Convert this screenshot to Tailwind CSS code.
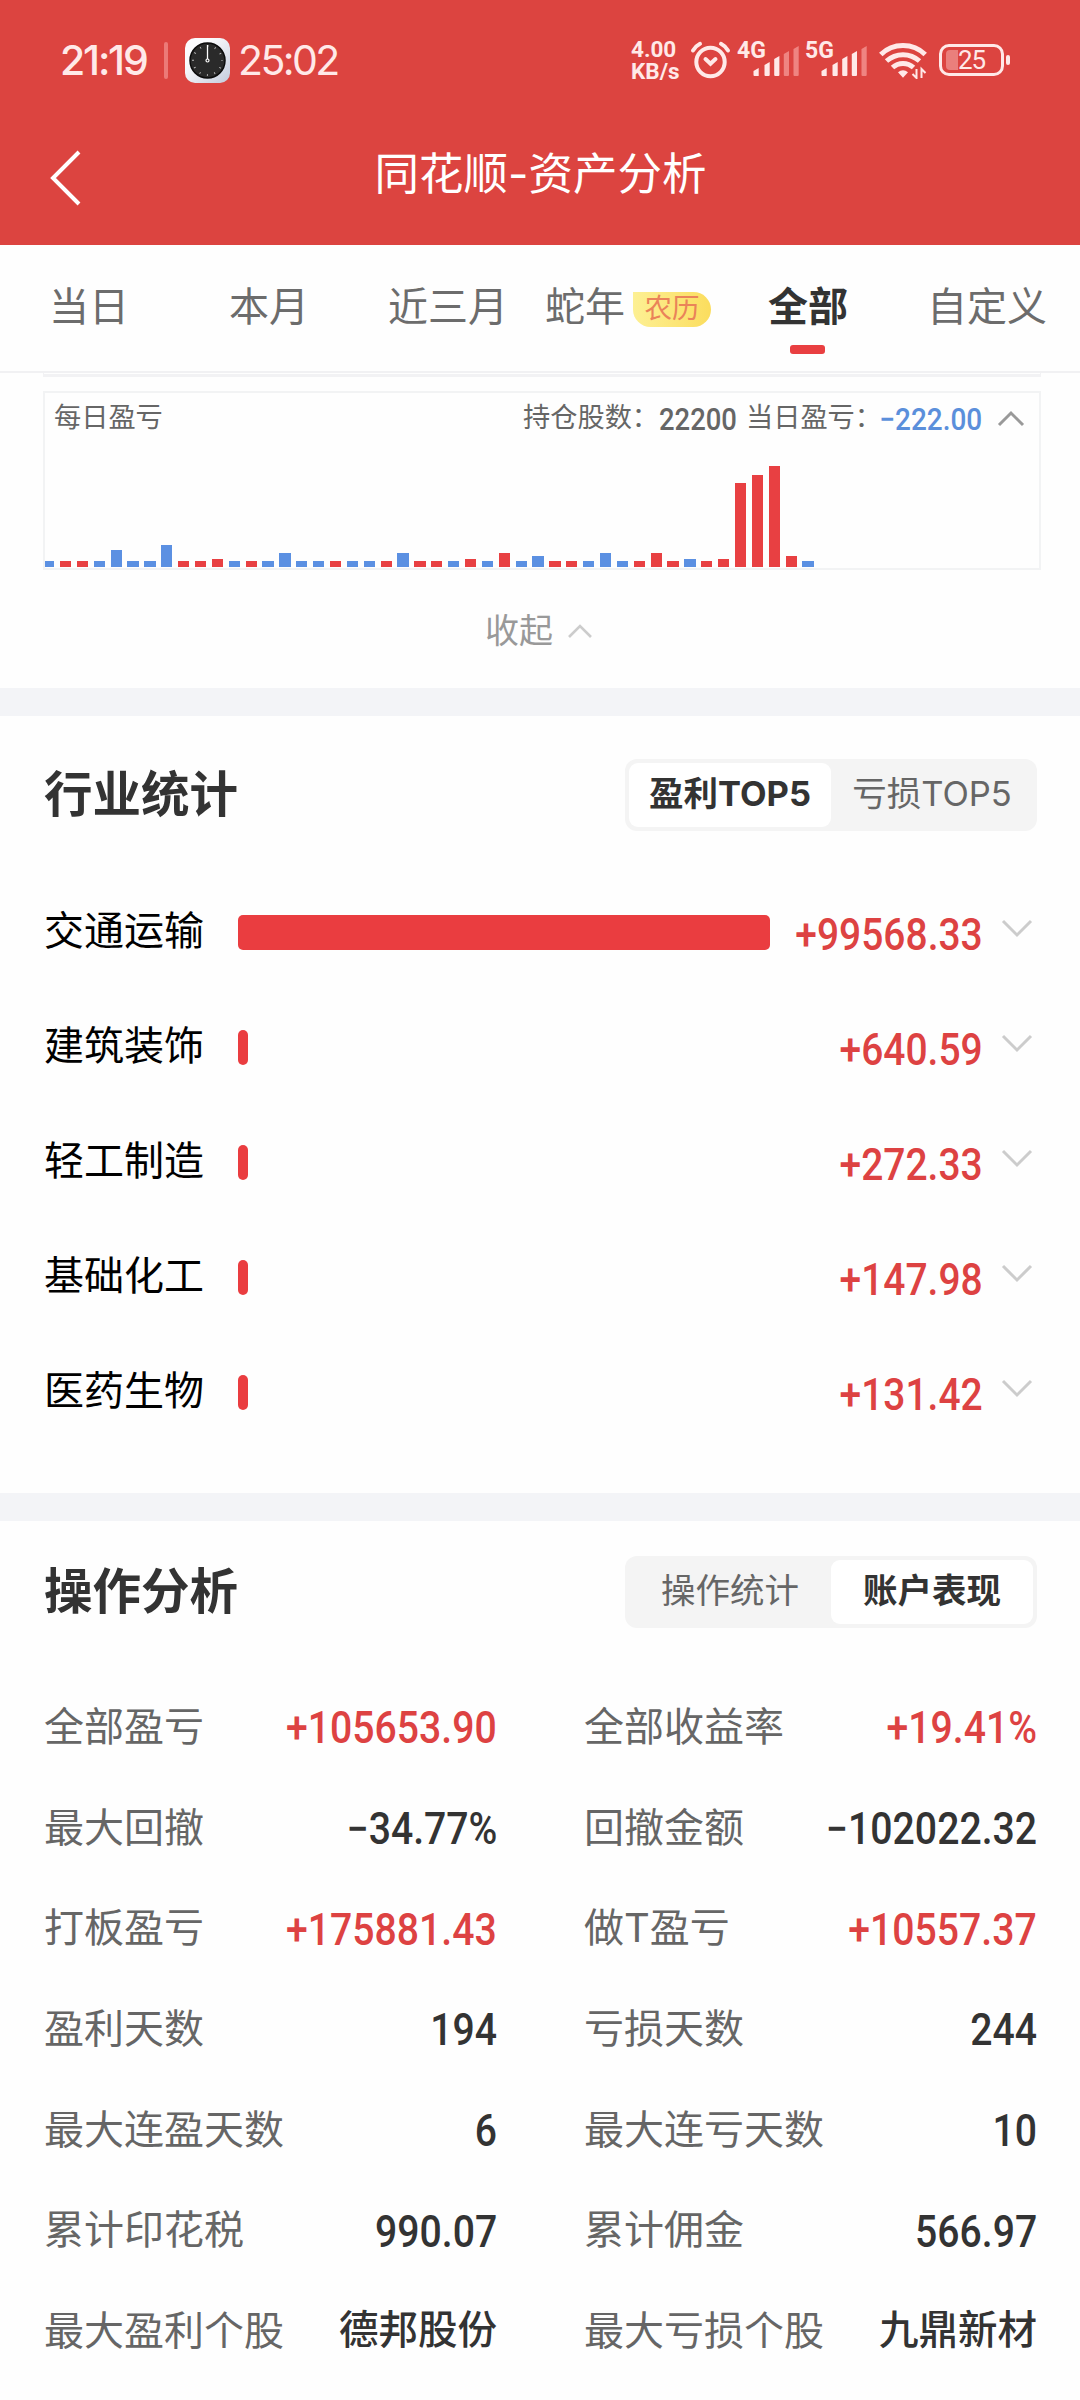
<!DOCTYPE html>
<html lang="zh-CN">
<head>
    <meta charset="UTF-8">
    <meta name="viewport" content="width=device-width, initial-scale=1.0">
    <title>同花顺-资产分析</title>
    <script src="https://cdn.jsdelivr.net/npm/@tailwindcss/browser@4"></script>
    <style>
        body { font-family: 'Inter', 'Noto Sans CJK SC', sans-serif; }
        .num { font-family: 'Roboto', 'Noto Sans CJK SC', sans-serif; }
    </style>
</head>
<body class="bg-[#fefefe] text-[#333] w-[1080px] h-[2400px] overflow-hidden leading-none">

    <!-- Cabecera -->
    <header class="h-[245px] bg-[#dc4440] text-white">
        <!-- Barra de estado -->
        <div class="h-[120px] flex items-center pl-[60px] text-[#ffe9e8]">
            <span class="w-[92px] text-[41px] font-medium tracking-[-2.2px] whitespace-nowrap">21:19</span>
            <span class="ml-[12px] w-1 h-[37px] rounded-full bg-[#ec7a77]"></span>
            <svg class="ml-[17px]" width="45" height="45" viewBox="0 0 45 45">
                <defs>
                    <linearGradient id="face" x1="0" y1="0" x2="1" y2="1">
                        <stop offset="0.3" stop-color="#fbfbfd"/>
                        <stop offset="1" stop-color="#c3cbdc"/>
                    </linearGradient>
                </defs>
                <rect width="45" height="45" rx="10" fill="url(#face)"/>
                <circle cx="22.5" cy="22.5" r="17.5" fill="#2a2a2a" stroke="#0c0c0c" stroke-width="1.5"/>
                <circle cx="22.5" cy="22.5" r="14.5" fill="none" stroke="#bbb" stroke-width="2" stroke-dasharray="0.9 6.69" stroke-dashoffset="0.45"/>
                <path d="M22.5 7v14" stroke="#fff" stroke-width="1.3"/>
                <circle cx="22.5" cy="22.5" r="1.5" fill="#222" stroke="#fff" stroke-width="1.2"/>
            </svg>
            <span class="ml-[8px] w-[110px] text-[41px] tracking-[-2.6px] whitespace-nowrap">25:02</span>

            <div class="num ml-auto w-[56px] text-[22.5px] leading-[22px] font-bold">
                <div class="whitespace-nowrap">4.00</div>
                <div class="whitespace-nowrap">KB/s</div>
            </div>
            <svg class="ml-[3px]" width="41" height="40" viewBox="0 0 41 40" fill="none" stroke="#ffe9e8" stroke-width="4" stroke-linecap="round">
                <circle cx="20.5" cy="22" r="14.2"/>
                <path d="M15.5 19l5 4.7 5-4.7"/>
                <path d="M3 10.5c2-3.200 4.200-5.300 7-6.700M38 10.500c-2-3.200-4.200-5.300-7-6.700"/>
            </svg>
            <div class="num ml-[6px] w-[68px] h-[37px] relative">
                <span class="absolute left-0 -top-[3px] text-[23px] font-bold">4G</span>
                <svg class="absolute left-[16px] top-0" width="46" height="37" fill="#ffe9e8">
                    <path d="M0.500 29l5.200-3v8h-4.200q-1 0-1-1zM11.500 23l5.200-3v13q0 1-1 1h-3.200q-1 0-1-1zM21.200 17l5.200-3v19q0 1-1 1h-3.200q-1 0-1-1z"/>
                    <path fill="#ef8481" d="M30.800 12l5.200-3v24q0 1-1 1h-3.200q-1 0-1-1zM40.500 7l5.200-3v29q0 1-1 1h-3.200q-1 0-1-1z"/>
                </svg>
            </div>
            <div class="num w-[68px] h-[37px] relative">
                <span class="absolute left-0 -top-[3px] text-[23px] font-bold">5G</span>
                <svg class="absolute left-[16px] top-0" width="46" height="37" fill="#ffe9e8">
                    <path d="M0.500 29l5.200-3v8h-4.200q-1 0-1-1zM11.500 23l5.200-3v13q0 1-1 1h-3.200q-1 0-1-1zM21.200 17l5.200-3v19q0 1-1 1h-3.200q-1 0-1-1zM30.800 12l5.200-3v24q0 1-1 1h-3.200q-1 0-1-1z"/>
                    <path fill="#ef8481" d="M40.500 7l5.200-3v29q0 1-1 1h-3.200q-1 0-1-1z"/>
                </svg>
            </div>
            <svg class="ml-[6px]" width="48" height="38" viewBox="0 0 48 38" fill="none" stroke="#ffe9e8" stroke-width="5">
                <path d="M1.800 13.500C14 1.500 34 1.500 46.200 13.500"/>
                <path d="M7.500 20C17 11.500 31 11.500 40.500 20"/>
                <path d="M13.500 26.500c6-5.500 15-5.500 21 0"/>
                <path d="M19 31.200q5-4 10 0L24 36.800z" fill="#ffe9e8" stroke="none"/>
                <path d="M37.500 28v9l-4-4M42.500 37v-9l4 4" stroke-width="2"/>
            </svg>
            <div class="num ml-[12px] w-[65px] h-[32px] border-[3px] border-[#ffe9e8] rounded-[10px] flex items-center pl-[4px]">
                <span class="w-[12px] h-[20px] bg-[#ea7f7c] rounded-l-[4px]"></span>
                <span class="w-[28px] text-[26px] tracking-[-1px]">25</span>
            </div>
            <span class="ml-[2px] mr-[70px] w-[4px] h-[10px] rounded-full bg-[#ffe9e8]"></span>
        </div>
        <!-- Título -->
        <div class="h-[106px] flex items-center">
            <svg class="ml-[49px] w-[33px] h-[58px] mt-[9px]" viewBox="0 0 33 58" fill="none" stroke="#fff" stroke-width="4">
                <path d="M30 3L4 29l26 26"/>
            </svg>
            <h1 class="flex-1 pr-[81px] text-center text-[44.5px] mt-[2px]">同花顺-资产分析</h1>
        </div>
    </header>

    <!-- Pestañas -->
    <nav class="h-[128px] border-b-2 border-[#f1f1f3] pl-[49px] flex items-center text-[40px] text-[#6c6c6c] whitespace-nowrap">
        <span class="-mt-[2px]">当日</span>
        <span class="-mt-[2px] ml-[100px]">本月</span>
        <span class="-mt-[2px] ml-[79px]">近三月</span>
        <span class="-mt-[2px] ml-[37px]">蛇年</span>
        <span class="ml-[8px] w-[78px] h-[35px] mt-[3px] flex items-center justify-center rounded-r-full rounded-bl-full bg-gradient-to-r from-[#fdf093] to-[#fbdd5d] text-[27.5px] text-[#ea8359]"><i class="not-italic -mt-px">农历</i></span>
        <span class="-mt-[2px] ml-[57px] font-bold text-[#333] relative">全部<b class="absolute left-[22px] top-[58px] w-[35px] h-[9px] rounded-[3px] bg-[#e93f41]"></b></span>
        <span class="-mt-[2px] ml-[79px]">自定义</span>
    </nav>

    <!-- Gráfico diario -->
    <section class="h-[315px] px-[43px] text-[#666]">
        <div class="h-1 w-[998px] border border-t-0 border-b-[3px] border-[#f2f2f4]"></div>
        <div class="mt-[14px] w-[998px] h-[179px] border-2 border-[#f2f3f4] flex flex-col overflow-hidden">
            <div class="flex items-center h-[50px] pl-[9px] text-[27.2px] whitespace-nowrap">
                <span>每日盈亏</span>
                <span class="ml-auto">持仓股数：</span>
                <span class="num w-[77px] mt-[2px] text-[31px] font-medium"><i class="not-italic inline-block origin-left scale-x-[.885]">22200</i></span>
                <span class="ml-[10px]">当日盈亏：</span>
                <span class="num w-[100px] mt-[2px] flex justify-end text-[31px] font-medium text-[#5b8fdb]"><i class="not-italic inline-block origin-right scale-x-[.9]">−222.00</i></span>
                <svg class="ml-[15px] mr-[14px]" width="28" height="18" viewBox="0 0 28 18" fill="none" stroke="#999" stroke-width="3"><path d="M2 16L14 4l12 12"/></svg>
            </div>
            <div id="bars" class="flex-1 -ml-[2px] mb-px flex items-end gap-[5.58px]"></div>
        </div>
        <div class="h-[119px] flex items-center justify-center pr-[2px] pt-[3px] text-[34px] text-[#999]">
            <span>收起</span>
            <svg class="ml-[14px]" width="26" height="16" viewBox="0 0 26 16" fill="none" stroke="#ccc" stroke-width="2.600"><path d="M2 14L13 3l11 11"/></svg>
        </div>
    </section>
    <div class="h-[28px] bg-[#f3f4f7]"></div>

    <!-- Estadística por sector -->
    <section class="h-[777px] pt-[43px] pl-[44px] pr-[43px]">
        <div class="flex items-center justify-between h-[72px]">
            <h2 class="text-[48.500px] font-bold mt-px">行业统计</h2>
            <div class="w-[412px] h-[72px] p-1 rounded-[12px] bg-[#f4f4f4] flex text-[34.500px]">
                <span class="flex-1 flex items-center justify-center rounded-[9px] bg-white font-bold pb-px">盈利TOP5</span>
                <span class="flex-1 flex items-center justify-center text-[#666] pb-px">亏损TOP5</span>
            </div>
        </div>
        <div id="sectors" class="mt-[43px]"></div>
    </section>
    <div class="h-[28px] bg-[#f3f4f7]"></div>

    <!-- Análisis de operaciones -->
    <section class="pt-[35px] pl-[44px] pr-[43px]">
        <div class="flex items-center justify-between h-[72px]">
            <h2 class="text-[48.500px] font-bold mt-px">操作分析</h2>
            <div class="w-[412px] h-[72px] p-1 rounded-[12px] bg-[#f4f4f4] flex text-[34.500px]">
                <span class="flex-1 flex items-center justify-center text-[#666] pb-px">操作统计</span>
                <span class="flex-1 flex items-center justify-center rounded-[9px] bg-white font-bold pb-px">账户表现</span>
            </div>
        </div>
        <div id="stats" class="mt-[48px] grid grid-cols-[453px_453px] gap-x-[87px]"></div>
    </section>

    <script>
        // Barras del gráfico: color (r/b) y altura
        const days = 'b6 r6 r6 b6 b17 b6 b6 b22 r6 r6 r8 b6 r6 b6 b14 b6 b6 r6 b6 b6 r6 b14 r6 r6 b6 r8 b6 r14 b6 b11 r6 r6 b6 b14 b6 r6 r14 r6 b8 r6 r8 r84 r92 r101 r11 b6'.split(' ');
        document.getElementById('bars').innerHTML = days.map(d => {
            const color = d[0] === 'r' ? 'bg-[#e84042]' : 'bg-[#5b90e2]';
            return `<span class="w-[11.3px] shrink-0 ${color}" style="height:${d.slice(1)}px"></span>`;
        }).join('');

        // Sectores
        const sectors = [
            ['交通运输', 532, '+99568.33'],
            ['建筑装饰', 10, '+640.59'],
            ['轻工制造', 10, '+272.33'],
            ['基础化工', 10, '+147.98'],
            ['医药生物', 10, '+131.42']
        ];
        document.getElementById('sectors').innerHTML = sectors.map(([name, width, value]) => `
            <div class="h-[115px] flex items-center">
                <span class="w-[194px] text-[40px] text-black -mt-px">${name}</span>
                <span class="h-[35px] mt-px rounded-[5px] bg-[#ea3d40]" style="width:${width}px"></span>
                <span class="num ml-auto w-[200px] -mr-[2px] -ml-[200px] flex justify-end text-[44px] font-medium text-[#dd4242] mt-[6px]"><i class="not-italic origin-right scale-x-[.885]">${value}</i></span>
                <svg class="ml-[19px] mr-[3px] -mt-[5px]" width="34" height="22" viewBox="0 0 34 22" fill="none" stroke="#ccc" stroke-width="3"><path d="M3 3l14 14 14-14"/></svg>
            </div>`).join('');

        // Resumen de la cuenta
        const stats = [
            ['全部盈亏', '+105653.90'], ['全部收益率', '+19.41%'],
            ['最大回撤', '−34.77%'], ['回撤金额', '−102022.32'],
            ['打板盈亏', '+175881.43'], ['做T盈亏', '+10557.37'],
            ['盈利天数', '194'], ['亏损天数', '244'],
            ['最大连盈天数', '6'], ['最大连亏天数', '10'],
            ['累计印花税', '990.07'], ['累计佣金', '566.97'],
            ['最大盈利个股', '德邦股份'], ['最大亏损个股', '九鼎新材']
        ];
        document.getElementById('stats').innerHTML = stats.map(([label, value]) => {
            const color = value[0] === '+' ? 'text-[#dd4242]' : 'text-[#333]';
            const isNum = /\d/.test(value);
            const size = isNum ? 'text-[44px] origin-right scale-x-[.89] mt-[4px]' : 'text-[39.5px] mt-px';
            return `
            <div class="h-[100.7px] flex items-center justify-between whitespace-nowrap">
                <span class="text-[40px] text-[#666] mt-px">${label}</span>
                <span class="num font-medium ${color} ${size}">${value}</span>
            </div>`;
        }).join('');
    </script>
</body>
</html>
